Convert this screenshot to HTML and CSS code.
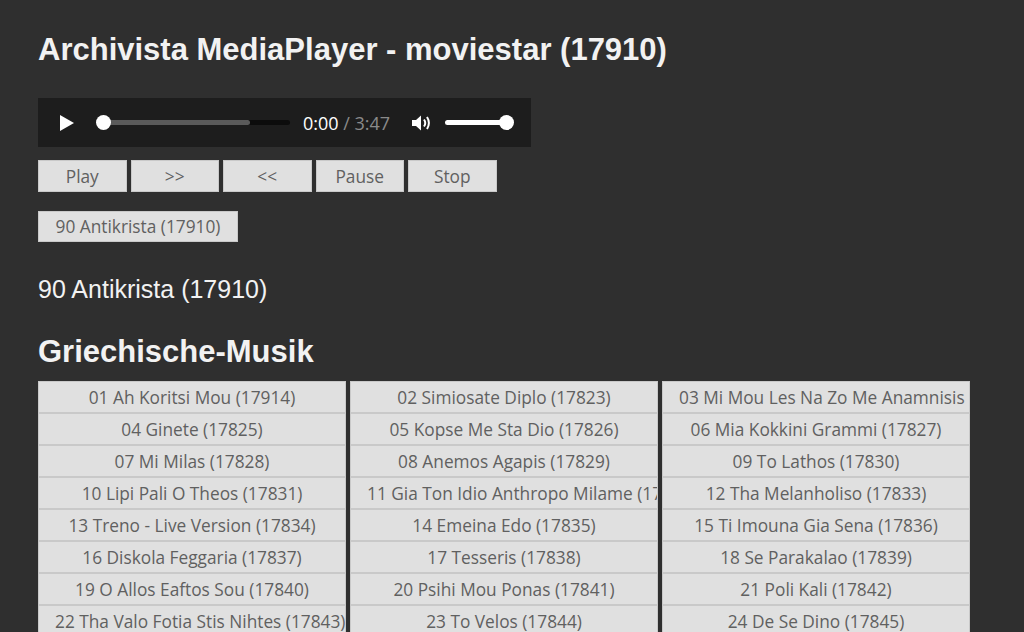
FILE: index.html
```html
<!DOCTYPE html>
<html lang="de">
<head>
<meta charset="utf-8">
<title>Archivista MediaPlayer</title>
<link rel="stylesheet" href="styles.css">
</head>
<body>
<h1 class="title">Archivista MediaPlayer - moviestar (17910)</h1>
<div class="player">
  <svg class="play-icon" width="16" height="18" viewBox="0 0 16 18"><path d="M1 1 L15 9 L1 17 Z" fill="#fff"/></svg>
  <div class="progress">
    <div class="progress-buffer"></div>
    <div class="progress-thumb"></div>
  </div>
  <div class="time"><span class="time-now">0:00</span><span class="time-total"> / 3:47</span></div>
  <svg class="vol-icon" width="21" height="18" viewBox="0 0 21 18">
    <path d="M1 6 H5 L10 1.5 V16.5 L5 12 H1 Z" fill="#fff"/>
    <path d="M13 5.5 Q15.5 9 13 12.5" stroke="#fff" stroke-width="2" fill="none"/>
    <path d="M16 3 Q19.8 9 16 15" stroke="#fff" stroke-width="2" fill="none"/>
  </svg>
  <div class="volume">
    <div class="volume-thumb"></div>
  </div>
</div>
<div class="controls">
  <button class="btn ctl">Play</button>
  <button class="btn ctl">&gt;&gt;</button>
  <button class="btn ctl">&lt;&lt;</button>
  <button class="btn ctl">Pause</button>
  <button class="btn ctl">Stop</button>
</div>
<div class="current-row">
  <button class="btn current">90 Antikrista (17910)</button>
</div>
<p class="now">90 Antikrista (17910)</p>
<h2 class="section">Griechische-Musik</h2>
<div class="tracks">
  <button class="btn track">01 Ah Koritsi Mou (17914)</button>
  <button class="btn track">02 Simiosate Diplo (17823)</button>
  <button class="btn track">03 Mi Mou Les Na Zo Me Anamnisis (17824)</button>
  <button class="btn track">04 Ginete (17825)</button>
  <button class="btn track">05 Kopse Me Sta Dio (17826)</button>
  <button class="btn track">06 Mia Kokkini Grammi (17827)</button>
  <button class="btn track">07 Mi Milas (17828)</button>
  <button class="btn track">08 Anemos Agapis (17829)</button>
  <button class="btn track">09 To Lathos (17830)</button>
  <button class="btn track">10 Lipi Pali O Theos (17831)</button>
  <button class="btn track">11 Gia Ton Idio Anthropo Milame (17832)</button>
  <button class="btn track">12 Tha Melanholiso (17833)</button>
  <button class="btn track">13 Treno - Live Version (17834)</button>
  <button class="btn track">14 Emeina Edo (17835)</button>
  <button class="btn track">15 Ti Imouna Gia Sena (17836)</button>
  <button class="btn track">16 Diskola Feggaria (17837)</button>
  <button class="btn track">17 Tesseris (17838)</button>
  <button class="btn track">18 Se Parakalao (17839)</button>
  <button class="btn track">19 O Allos Eaftos Sou (17840)</button>
  <button class="btn track">20 Psihi Mou Ponas (17841)</button>
  <button class="btn track">21 Poli Kali (17842)</button>
  <button class="btn track">22 Tha Valo Fotia Stis Nihtes (17843)</button>
  <button class="btn track">23 To Velos (17844)</button>
  <button class="btn track">24 De Se Dino (17845)</button>
</div>
</body>
</html>
```
FILE: styles.css
```css
html, body {
  background: #2f2f2f;
}
body {
  margin: 0;
  padding: 32px 38px 0 38px;
  color: #f2f2f2;
  font-family: "Liberation Sans", Arial, sans-serif;
  overflow: hidden;
  height: 632px;
  box-sizing: border-box;
}
.title {
  margin: 0;
  font-size: 31px;
  line-height: 36px;
  font-weight: bold;
}
.player {
  margin-top: 30px;
  width: 493px;
  height: 49px;
  background: #1d1d1d;
  display: flex;
  align-items: center;
  box-sizing: border-box;
  padding-left: 21px;
}
.play-icon {
  display: block;
  flex: none;
}
.progress {
  position: relative;
  margin-left: 29px;
  width: 186px;
  height: 5px;
  background: #0c0c0c;
  border-radius: 3px;
  flex: none;
}
.progress-buffer {
  width: 146px;
  height: 5px;
  background: #5a5a5a;
  border-radius: 3px;
}
.progress-thumb {
  position: absolute;
  left: -8px;
  top: -5px;
  width: 15px;
  height: 15px;
  border-radius: 50%;
  background: #fff;
}
.time {
  margin-left: 13px;
  font-family: "Open Sans", sans-serif;
  font-size: 18px;
  color: #fff;
  flex: none;
}
.time-total {
  color: #8a8a8a;
}
.vol-icon {
  display: block;
  margin-left: 21px;
  flex: none;
}
.volume {
  position: relative;
  margin-left: 13px;
  width: 61px;
  height: 5px;
  background: #fff;
  border-radius: 3px;
  flex: none;
}
.volume-thumb {
  position: absolute;
  right: -8px;
  top: -5px;
  width: 15px;
  height: 15px;
  border-radius: 50%;
  background: #fff;
}
.btn {
  font-family: "Open Sans", "Noto Sans", sans-serif;
  font-size: 17.3px;
  color: #606060;
  background: #e0e0e0;
  border: 1px solid #c9c9c9;
  padding: 0 16px;
  margin: 0;
  box-sizing: border-box;
  white-space: nowrap;
  overflow: hidden;
}
.controls {
  margin-top: 13px;
  display: flex;
  gap: 4px;
}
.ctl {
  width: 88.5px;
  height: 32px;
  padding: 0;
}
.current-row {
  margin-top: 19px;
  display: flex;
}
.current {
  width: 200px;
  height: 31px;
  padding: 0;
}
.now {
  margin: 33px 0 0 0;
  font-size: 25px;
  line-height: 28px;
}
.section {
  margin: 31px 0 0 0;
  font-size: 31px;
  line-height: 36px;
  font-weight: bold;
}
.tracks {
  margin-top: 11px;
  display: grid;
  grid-template-columns: repeat(3, 308px);
  column-gap: 4px;
}
.track {
  height: 32px;
  text-overflow: clip;
}
```
